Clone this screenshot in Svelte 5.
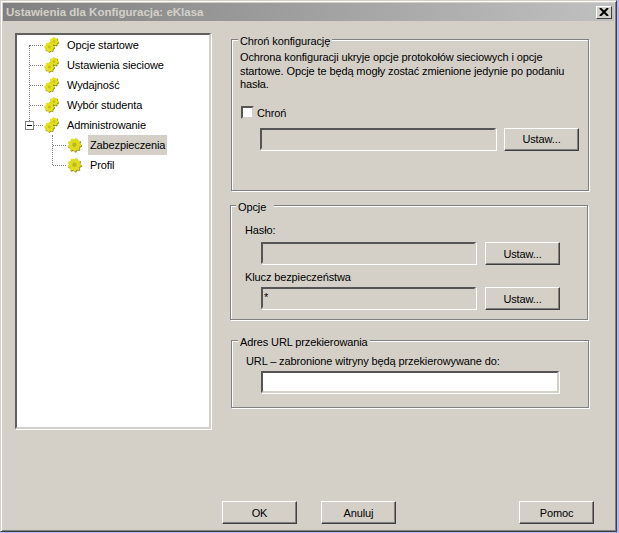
<script lang="ts">
  const topItems = ["Opcje startowe", "Ustawienia sieciowe", "Wydajność", "Wybór studenta"];

  // outline of a cog, alternating tooth and root radius
  function cog(cx: number, cy: number, outer: number, inner: number, teeth: number) {
    const pts = [];
    const step = (Math.PI * 2) / (teeth * 4);
    for (let i = 0; i < teeth * 4; i++) {
      const r = i % 4 < 2 ? outer : inner;
      const a = i * step;
      pts.push(`${(cx + r * Math.cos(a)).toFixed(2)},${(cy + r * Math.sin(a)).toFixed(2)}`);
    }
    return pts.join(" ");
  }
</script>

{#snippet pair()}
  <svg class="icon" width="15" height="16" viewBox="0 0 15 16">
    <polygon points={cog(10.6, 5.3, 4.6, 3.7, 7)} fill="#8f8c18" />
    <polygon points={cog(10, 4.6, 4.4, 3.6, 7)} fill="#e6e020" />
    <circle cx="10" cy="4.6" r="1.3" fill="#c4be20" />
    <polygon points={cog(5.9, 10.6, 5.2, 4.3, 8)} fill="#8f8c18" />
    <polygon points={cog(5.3, 10, 5, 4.2, 8)} fill="#e6e020" />
    <circle cx="5.3" cy="10" r="1.5" fill="#c4be20" />
  </svg>
{/snippet}

{#snippet gear()}
  <svg class="icon" width="15" height="16" viewBox="0 0 15 16">
    <polygon points={cog(8, 8.6, 7, 5.7, 9)} fill="#8f8c18" />
    <polygon points={cog(7.4, 7.8, 6.8, 5.6, 9)} fill="#e2dc20" />
    <circle cx="7.4" cy="7.8" r="2.2" fill="#bdb820" />
  </svg>
{/snippet}

<div class="dialog">
  <div class="titlebar">
    <span>Ustawienia dla Konfiguracja: eKlasa</span>
    <button class="close" aria-label="Zamknij">
      <svg width="10" height="8" viewBox="0 0 10 8"><path d="M1 0 L9 8 M9 0 L1 8" stroke="#000" stroke-width="2" /></svg>
    </button>
  </div>

  <div class="body">
    <div class="tree">
      <div class="rail"></div>
      <div class="subrail"></div>
      {#each topItems as item}
        <div class="row">
          <i class="dash"></i>
          {@render pair()}
          <span class="label">{item}</span>
        </div>
      {/each}
      <div class="row">
        <i class="dash"></i>
        <b class="expander"></b>
        {@render pair()}
        <span class="label">Administrowanie</span>
      </div>
      <div class="row sub">
        <i class="dash"></i>
        {@render gear()}
        <span class="label selected">Zabezpieczenia</span>
      </div>
      <div class="row sub">
        <i class="dash"></i>
        {@render gear()}
        <span class="label">Profil</span>
      </div>
    </div>

    <div class="panels">
      <section class="group protect">
        <h4>Chroń konfigurację</h4>
        <p>Ochrona konfiguracji ukryje opcje protokołów sieciowych i opcje startowe. Opcje te będą mogły zostać zmienione jedynie po podaniu hasła.</p>
        <div class="check"><i class="box"></i>Chroń</div>
        <div class="line">
          <div class="field"></div>
          <button class="btn">Ustaw...</button>
        </div>
      </section>

      <section class="group options">
        <h4>Opcje&nbsp;&nbsp;</h4>
        <div class="cap">Hasło:</div>
        <div class="line">
          <div class="field"></div>
          <button class="btn">Ustaw...</button>
        </div>
        <div class="cap second">Klucz bezpieczeństwa</div>
        <div class="line">
          <div class="field">*</div>
          <button class="btn">Ustaw...</button>
        </div>
      </section>

      <section class="group url">
        <h4>Adres URL przekierowania</h4>
        <div class="cap">URL – zabronione witryny będą przekierowywane do:</div>
        <div class="field white"></div>
      </section>
    </div>
  </div>

  <div class="footer">
    <button class="btn">OK</button>
    <button class="btn">Anuluj</button>
    <button class="btn help">Pomoc</button>
  </div>
</div>

<style>
  :global(body) {
    margin: 0;
    background: #b4b8f4;
  }
  .dialog {
    box-sizing: border-box;
    width: 617px;
    height: 532px;
    display: flex;
    flex-direction: column;
    background: #d4d0c8;
    border: 1px solid #404040;
    border-top-color: #d4d0c8;
    border-left-color: #d4d0c8;
    box-shadow: inset 1px 1px 0 #fff, inset -1px -1px 0 #808080;
    padding: 2px 2px 0 2px;
    font: 11px "Liberation Sans", Arial, sans-serif;
    letter-spacing: -0.12px;
    color: #000;
  }
  .titlebar {
    height: 18px;
    flex: none;
    display: flex;
    align-items: center;
    justify-content: space-between;
    padding: 0 2px 0 3px;
    background: linear-gradient(to right, #808080, #c0c0c0);
    color: #d4d0c8;
    font: bold 11.5px "Liberation Sans", sans-serif;
    letter-spacing: 0;
  }
  .close {
    box-sizing: border-box;
    width: 16px;
    height: 13px;
    padding: 0;
    display: flex;
    align-items: center;
    justify-content: center;
    background: #d4d0c8;
    border: 1px solid;
    border-color: #fff #404040 #404040 #fff;
  }
  .body {
    display: flex;
    align-items: flex-start;
    padding: 12px 0 0 12px;
    gap: 20px;
  }
  .tree {
    position: relative;
    box-sizing: border-box;
    width: 196px;
    height: 396px;
    flex: none;
    background: #fff;
    border: 2px solid;
    border-color: #606060 #d4d0c8 #d4d0c8 #606060;
    box-shadow: 1px 1px 0 #fff;
  }
  .rail {
    position: absolute;
    left: 12px;
    top: 10px;
    height: 76px;
    border-left: 1px dotted #808080;
  }
  .subrail {
    position: absolute;
    left: 35px;
    top: 100px;
    height: 30px;
    border-left: 1px dotted #808080;
  }
  .row {
    position: relative;
    height: 20px;
    display: flex;
    align-items: center;
    padding-left: 27px;
  }
  .row.sub {
    padding-left: 50px;
  }
  .dash {
    position: absolute;
    left: 13px;
    top: 10px;
    width: 13px;
    border-top: 1px dotted #808080;
  }
  .row.sub .dash {
    left: 36px;
  }
  .expander {
    position: absolute;
    left: 8px;
    top: 6px;
    box-sizing: border-box;
    width: 9px;
    height: 9px;
    background: linear-gradient(#000, #000) center / 5px 1px no-repeat #fff;
    border: 1px solid #808080;
  }
  .icon {
    flex: none;
    position: relative;
  }
  .label {
    margin-left: 6px;
    padding: 0 2px;
    line-height: 20px;
  }
  .selected {
    background: #d4d0c8;
  }
  .group {
    box-sizing: border-box;
    width: 358px;
    border: 1px solid #808080;
    box-shadow: inset 1px 1px 0 #fff, 1px 1px 0 #fff;
  }
  h4 {
    width: fit-content;
    margin: -6px 0 0 6px;
    padding: 0 2px;
    font: inherit;
    line-height: 14px;
    background: #d4d0c8;
  }
  .protect {
    height: 152px;
    margin-top: 6px;
  }
  .options {
    height: 115px;
    margin: 14px 0 0 -1px;
  }
  .options h4 {
    margin-left: 5px;
  }
  .url {
    height: 68px;
    margin-top: 20px;
  }
  p {
    margin: 3px 0 0 8px;
    width: 340px;
    line-height: 13.5px;
  }
  .check {
    display: flex;
    align-items: center;
    gap: 3px;
    margin: 14px 0 0 9px;
    height: 14px;
  }
  .box {
    box-sizing: border-box;
    width: 13px;
    height: 13px;
    background: #fff;
    border: 2px solid;
    border-color: #555 #d4d0c8 #d4d0c8 #555;
  }
  .cap {
    line-height: 14px;
    margin: 9px 0 0 14px;
  }
  .cap.second {
    margin-top: 5px;
  }
  .url .cap {
    margin-top: 5px;
  }
  .line {
    display: flex;
    gap: 9px;
    margin: 5px 0 0 30px;
  }
  .options .line + .cap + .line {
    margin-top: 3px;
  }
  .protect .line {
    gap: 8px;
    margin: 8px 0 0 28px;
  }
  .field {
    box-sizing: border-box;
    width: 215px;
    height: 22px;
    padding-left: 1px;
    line-height: 16px;
    border: 2px solid;
    border-color: #555 #d4d0c8 #d4d0c8 #555;
    box-shadow: 1px 1px 0 #fff;
  }
  .protect .field {
    width: 236px;
  }
  .field.white {
    width: 298px;
    background: #fff;
    margin: 3px 0 0 29px;
  }
  .btn {
    box-sizing: border-box;
    width: 75px;
    height: 23px;
    padding: 0;
    background: #d4d0c8;
    border: 1px solid;
    border-color: #fff #404040 #404040 #fff;
    box-shadow: inset -1px -1px 0 #808080;
    font: inherit;
    letter-spacing: inherit;
    color: #000;
  }
  .footer {
    display: flex;
    gap: 24px;
    margin-top: auto;
    padding: 0 20px 7px 219px;
  }
  .help {
    margin-left: auto;
  }
</style>
